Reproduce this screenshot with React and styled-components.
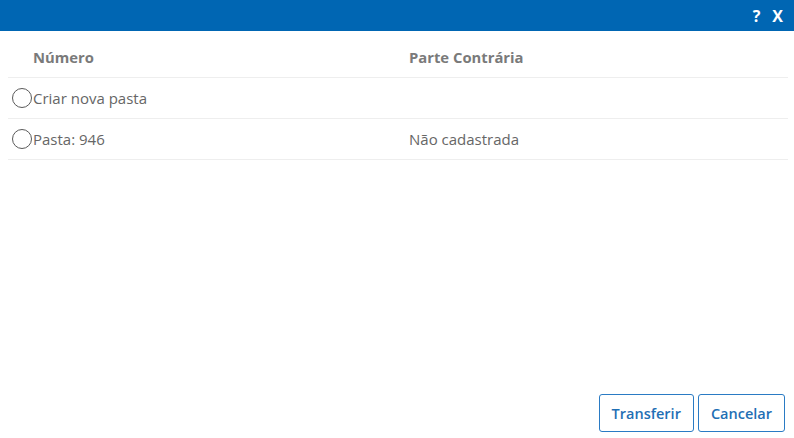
import React from "react";
import styled, { createGlobalStyle } from "styled-components";

const Global = createGlobalStyle`
  html, body { margin: 0; padding: 0; background: #fff; }
  body { font-family: "Open Sans", "Noto Sans", sans-serif; }
  * { box-sizing: border-box; }
`;

const Dialog = styled.div`
  width: 794px;
  height: 438px;
  display: flex;
  flex-direction: column;
  background: #fff;
`;

const TitleBar = styled.div`
  height: 31px;
  background: #0066b3;
  display: flex;
  justify-content: flex-end;
  align-items: center;
  gap: 12px;
  padding-right: 11px;
`;

const TitleButton = styled.span`
  color: #fff;
  font-family: "Open Sans", sans-serif;
  font-weight: 700;
  font-size: 16px;
  line-height: 1;
  cursor: pointer;
`;

const Body = styled.div`
  flex: 1;
  padding: 6px 6px 0 8px;
`;

const Table = styled.div`
  display: grid;
  grid-template-columns: 390px 1fr;
`;

const HeadCell = styled.div`
  height: 41px;
  display: flex;
  align-items: center;
  padding-left: ${(p) => p.$pad}px;
  font-weight: 700;
  font-size: 14.8px;
  color: #7a7a7a;
  border-bottom: 1px solid #eee;
`;

const Cell = styled.div`
  height: 41px;
  display: flex;
  align-items: center;
  padding-left: ${(p) => p.$pad}px;
  font-size: 15px;
  color: #666;
  border-bottom: 1px solid #eee;
`;

const Radio = styled.span`
  width: 20px;
  height: 20px;
  border-radius: 50%;
  border: 1.5px solid #5a5a5a;
  margin-right: 1px;
  flex-shrink: 0;
`;

const Footer = styled.div`
  display: flex;
  justify-content: flex-end;
  gap: 4px;
  padding: 0 9px 6px 0;
`;

const Button = styled.button`
  height: 38px;
  padding: 0 12px;
  background: #fff;
  border: 1px solid #2a7bc4;
  border-radius: 3px;
  color: #1f6fb5;
  font-family: "Open Sans", sans-serif;
  font-weight: 600;
  font-size: 14.5px;
  cursor: pointer;
`;

const rows = [
  { num: "Criar nova pasta", parte: "" },
  { num: "Pasta: 946", parte: "Não cadastrada" },
];

export default function App() {
  return (
    <>
      <Global />
      <Dialog>
        <TitleBar>
          <TitleButton>?</TitleButton>
          <TitleButton>X</TitleButton>
        </TitleBar>
        <Body>
          <Table>
            <HeadCell $pad={25}>Número</HeadCell>
            <HeadCell $pad={11}>Parte Contrária</HeadCell>
            {rows.map((r) => (
              <React.Fragment key={r.num}>
                <Cell $pad={4}>
                  <Radio />
                  {r.num}
                </Cell>
                <Cell $pad={11}>{r.parte}</Cell>
              </React.Fragment>
            ))}
          </Table>
        </Body>
        <Footer>
          <Button>Transferir</Button>
          <Button>Cancelar</Button>
        </Footer>
      </Dialog>
    </>
  );
}
